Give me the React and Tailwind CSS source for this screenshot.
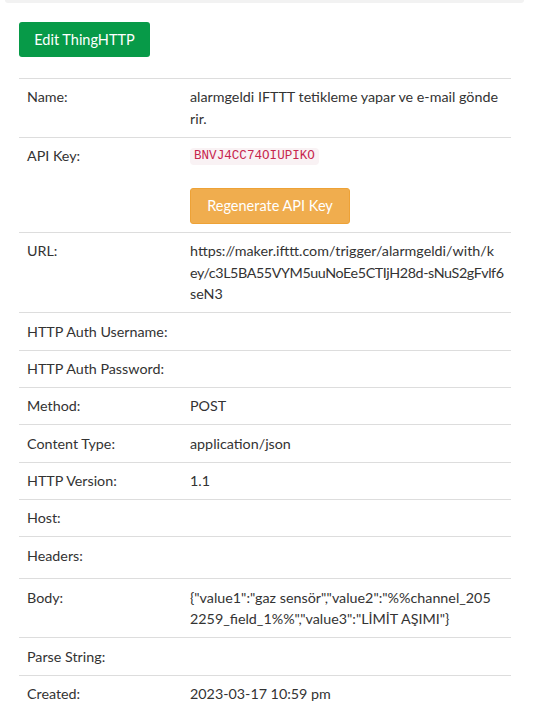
import React from 'react';

// long values are split where the original page broke them
const rows = [
  { label: 'Name:', lines: ['alarmgeldi IFTTT tetikleme yapar ve e-mail gönde', 'rir.'] },
  { label: 'API Key:', apiKey: 'BNVJ4CC74OIUPIKO' },
  {
    label: 'URL:',
    lines: [
      'https://maker.ifttt.com/trigger/alarmgeldi/with/k',
      'ey/c3L5BA55VYM5uuNoEe5CTIjH28d-sNuS2gFvlf6',
      'seN3',
    ],
    tight: 1,
  },
  { label: 'HTTP Auth Username:', lines: [] },
  { label: 'HTTP Auth Password:', lines: [] },
  { label: 'Method:', lines: ['POST'] },
  { label: 'Content Type:', lines: ['application/json'] },
  { label: 'HTTP Version:', lines: ['1.1'] },
  { label: 'Host:', lines: [] },
  { label: 'Headers:', lines: [], tall: true },
  {
    label: 'Body:',
    lines: ['{"value1":"gaz sensör","value2":"%%channel_205', '2259_field_1%%","value3":"LİMİT AŞIMI"}'],
  },
  { label: 'Parse String:', lines: [] },
  { label: 'Created:', lines: ['2023-03-17 10:59 pm'] },
];

const btnFont = { fontFamily: 'Lato, "Noto Sans", sans-serif' };

const Row = ({ row }) => (
  <div className={`grid grid-cols-[163px_1fr] border-t border-[#dddddd] ${row.tall ? 'min-h-[42px]' : ''}`}>
    <div className="px-2 py-[7.33px] whitespace-nowrap">{row.label}</div>
    <div className="px-2 py-[7.33px]">
      {row.apiKey ? (
        <div className="flex flex-col items-start">
          <code className="font-['Liberation_Mono',monospace] text-[12.6px] leading-[17px] px-[4px] mt-[3px] rounded-[4px] bg-[#f9f2f4] text-[#c7254e]">
            {row.apiKey}
          </code>
          <button
            style={btnFont}
            className="mt-[23px] w-[160px] h-[36px] rounded-[3px] bg-[#f0ad4e] border border-[#eea236] text-white text-[14.5px]"
          >
            Regenerate API Key
          </button>
        </div>
      ) : (
        row.lines.map((line, i) => (
          <div
            key={line}
            className={`whitespace-nowrap ${row.tight === i ? 'tracking-[-0.4px]' : ''}`}
          >
            {line}
          </div>
        ))
      )}
    </div>
  </div>
);

export default function App() {
  return (
    <div className="min-h-[723px] bg-white text-[#333333] font-['Lato',sans-serif] text-[14.3px] leading-[21.67px]">
      <div className="ml-[5px] w-[519px] h-[3px] rounded-b-[4px] bg-[#f2f2f2]" />
      <div className="px-[19px] pt-[19px] w-[530px]">
        <button
          style={btnFont}
          className="w-[131px] h-[35px] rounded-[3px] bg-[#079a48] text-white text-[14.5px]"
        >
          Edit ThingHTTP
        </button>
        <div className="mt-[21px] w-[492px]">
          {rows.map((row) => (
            <Row key={row.label} row={row} />
          ))}
        </div>
      </div>
    </div>
  );
}
